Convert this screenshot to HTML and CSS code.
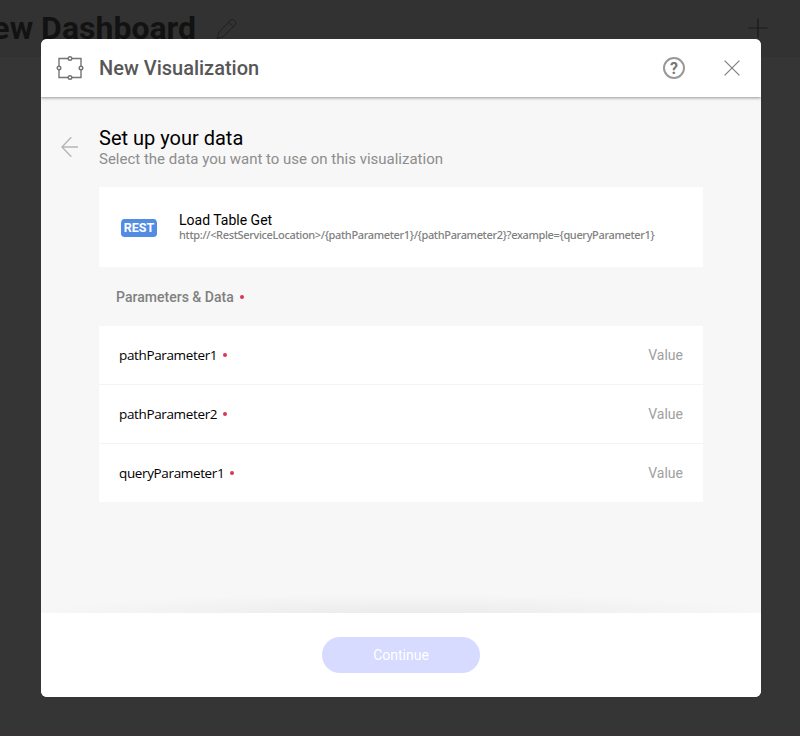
FILE: index.html
```html
<!DOCTYPE html>
<html lang="en">
<head>
<meta charset="utf-8">
<title>New Visualization</title>
<link rel="stylesheet" href="styles.css">
</head>
<body>
<div class="dashboard">
  <header class="dash-header">
    <h1 class="dash-title">New Dashboard</h1>
    <svg class="pencil" width="22" height="22" viewBox="0 0 22 22"><path d="M1 20.500 3 14 14.800 2.200Q16.500.7 18.200 2.200L19.500 3.500Q20.800 5 19.300 6.800L7.500 18.300 1 20.500M12.700 4.300l4.600 4.600"/></svg>
    <svg class="plus" width="20" height="20" viewBox="0 0 20 20"><path d="M10 .5v19M.5 10h19"/></svg>
  </header>
</div>
<div class="overlay">
  <section class="modal">
    <header class="modal-header">
      <svg class="viz-icon" width="28" height="26" viewBox="0 0 28 26"><path d="M3 11V3.500H12M16 3.500H25V11M25 15V22.500H16M12 22.500H3V15"/><circle cx="14" cy="3.500" r="1.800"/><circle cx="25" cy="13" r="1.800"/><circle cx="14" cy="22.500" r="1.800"/><circle cx="3" cy="13" r="1.800"/></svg>
      <h2 class="modal-title">New Visualization</h2>
      <span class="help">?</span>
      <svg class="close" width="16" height="16" viewBox="0 0 16 16"><path d="m.6.6 14.800 14.800M15.400.6.6 15.400"/></svg>
    </header>
    <main class="modal-body">
      <svg class="back" width="18" height="22" viewBox="0 0 18 22"><path d="M18 11H2M11.300 1.200 2 11l9.300 9.800"/></svg>
      <div class="content">
        <h3 class="heading">Set up your data</h3>
        <p class="subheading">Select the data you want to use on this visualization</p>
        <div class="source">
          <span class="badge">REST</span>
          <div>
            <div class="source-name">Load Table Get</div>
            <div class="source-url">http://&lt;RestServiceLocation&gt;/{pathParameter1}/{pathParameter2}?example={queryParameter1}</div>
          </div>
        </div>
        <div class="section-label"><span>Parameters &amp; Data</span><i class="dot"></i></div>
        <div class="params">
          <div class="row"><span class="param">pathParameter1</span><i class="dot"></i><span class="value">Value</span></div>
          <div class="row"><span class="param">pathParameter2</span><i class="dot"></i><span class="value">Value</span></div>
          <div class="row"><span class="param">queryParameter1</span><i class="dot"></i><span class="value">Value</span></div>
        </div>
      </div>
    </main>
    <footer class="modal-footer"><button class="continue" disabled>Continue</button></footer>
  </section>
</div>
</body>
</html>
```
FILE: styles.css
```css
* { box-sizing: border-box; }
body { margin: 0; height: 736px; overflow: hidden; background: #353535; font-family: Roboto, sans-serif; }
h1, h2, h3, p { margin: 0; }
svg { display: block; fill: none; flex: none; }
.dashboard { height: 736px; border-bottom: 1px solid #3b3035; }
.dash-header { display: flex; height: 57px; background: #323232; }
.dash-title { width: 196px; height: 56px; display: flex; justify-content: flex-end; white-space: nowrap; color: #121212; font-size: 32px; line-height: 56px; font-weight: 700; }
.pencil { margin: 18px 0 0 20px; stroke: #1f1f1f; }
.plus { margin: 18px 32px 0 auto; stroke: #1a1a1a; stroke-width: 1.2; }
.overlay { position: absolute; inset: 0; padding: 39px 39px 39px 41px; }
.modal { width: 720px; height: 658px; display: flex; flex-direction: column; border-radius: 6px; overflow: hidden; background: #f7f7f7; }
.modal-header { height: 58px; flex: none; display: flex; align-items: center; padding: 0 21px 0 15px; background: #fff; box-shadow: 0 1px 3px rgba(0,0,0,.4); z-index: 1; }
.viz-icon { stroke: #747474; stroke-width: 1.4; }
.modal-title { margin-left: 15px; color: #575757; font-size: 20px; line-height: 24px; font-weight: 500; }
.help { width: 22px; height: 22px; margin-left: auto; border: 2px solid #999; border-radius: 50%; color: #777; font-size: 16px; line-height: 19px; font-weight: 700; text-align: center; }
.close { margin-left: 39px; stroke: #858585; stroke-width: 1.3; }
.modal-body { flex: 1; display: flex; padding: 29px 58px 0 19px; background: radial-gradient(ellipse 370px 19px at 50% 100%, #ebebeb, #f7f7f7); }
.back { margin: 10px 21px 0 0; stroke: #b6b6b6; stroke-width: 1.4; }
.content { flex: 1; }
.heading { color: #000; font-size: 20px; line-height: 24px; font-weight: 400; }
.subheading { margin-bottom: 19px; color: #8d8d8d; font-size: 15px; line-height: 18px; }
.source { height: 80px; display: flex; align-items: center; padding-left: 21px; background: #fff; }
.badge { width: 38px; height: 19px; margin: 2px 21px 0 0; border: 1px solid #fff; border-width: 0 1px 1px; border-radius: 4px; background: #528ce5; background-clip: padding-box; color: #fff; font-size: 12.500px; line-height: 18px; font-weight: 700; text-align: center; }
.source-name { color: #000; font-size: 14px; line-height: 16px; }
.source-url { color: #808080; font-family: "Noto Sans", sans-serif; font-size: 11px; line-height: 14px; letter-spacing: -.35px; font-weight: 500; white-space: nowrap; }
.section-label { height: 59px; display: flex; align-items: center; padding: 1px 0 0 17px; color: #808080; font-size: 14px; font-weight: 500; letter-spacing: .02px; }
.dot { width: 4px; height: 4px; margin-left: 6px; border-radius: 50%; background: #dc3558; }
.params { display: grid; gap: 1px; background: #f4f4f4; }
.row { height: 58px; display: flex; align-items: center; padding: 0 20px; background: #fff; }
.param { color: #000; font-family: "Open Sans", sans-serif; font-size: 13.500px; line-height: 20px; letter-spacing: -.36px; }
.value { margin-left: auto; color: #a0a0a0; font-size: 14px; }
.modal-footer { height: 84px; flex: none; display: flex; align-items: center; justify-content: center; background: #fff; }
.continue { width: 158px; height: 36px; padding: 0; border: 0; border-radius: 18px; background: #d6dbff; color: #fff; font-family: Roboto, sans-serif; font-size: 14px; }
```
